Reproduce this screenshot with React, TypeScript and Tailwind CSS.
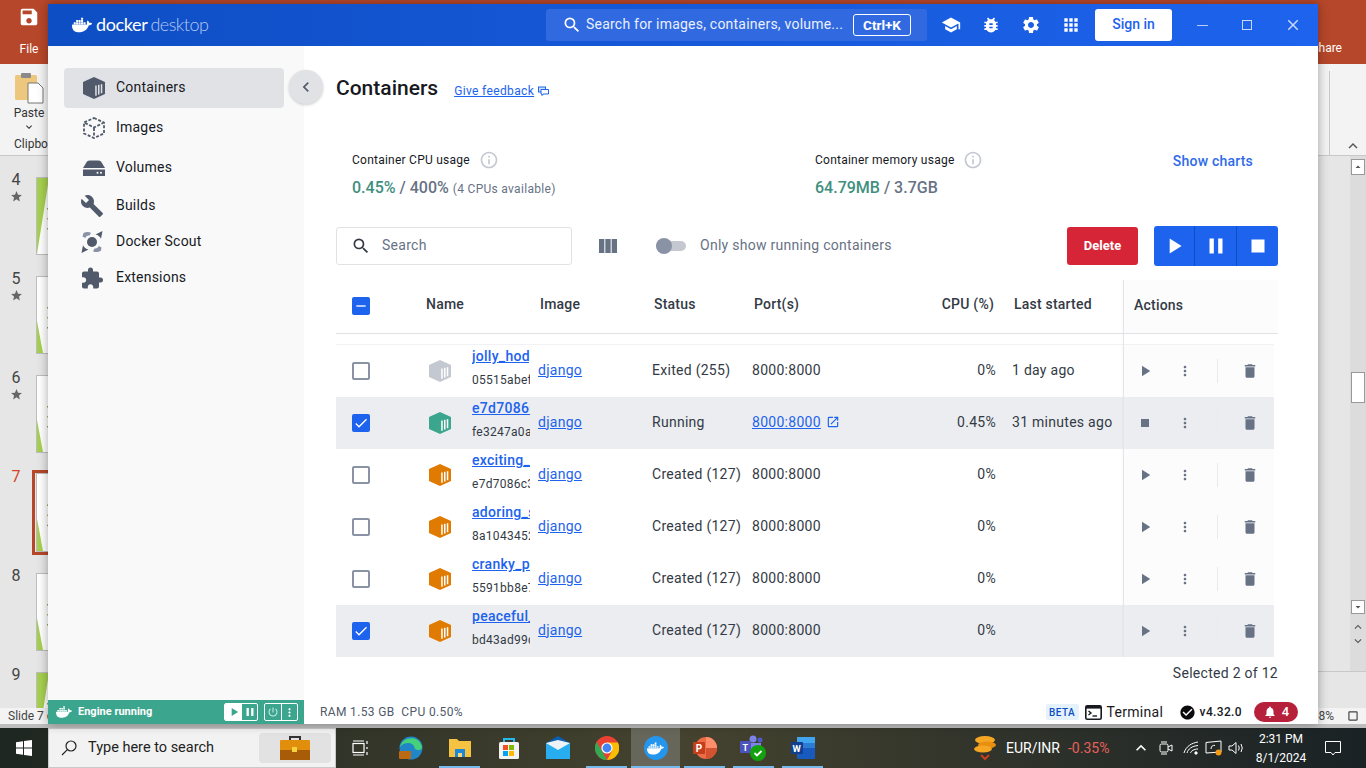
import React from "react";
import { SiDocker } from "react-icons/si";
import {
  MdSearch, MdSchool, MdBugReport, MdSettings, MdApps, MdInfoOutline, MdPlayArrow, MdPause, MdStop,
  MdDelete, MdMoreVert, MdOpenInNew, MdBuild, MdExtension, MdViewColumn, MdPowerSettingsNew,
  MdNotifications, MdCheckCircle, MdChevronLeft, MdKeyboardArrowDown, MdKeyboardArrowUp, MdCheck, MdRemove,
  MdStar, MdSave, MdClose, MdCropSquare, MdArrowDropUp, MdArrowDropDown,
} from "react-icons/md";

function Box({ color, stripe = "#fff", size = 24 }: { color: string; stripe?: string; size?: number }) {
  return (
    <svg width={size} height={size} viewBox="0 0 24 24">
      <polygon points="12,1 23,6 23,18 12,23 1,18 1,6" fill={color} />
      <g fill={stripe}>
        <rect x="13.2" y="9.5" width="1.5" height="10.2" />
        <rect x="16" y="8.8" width="1.5" height="9.7" />
        <rect x="18.8" y="8.2" width="1.5" height="9" />
      </g>
    </svg>
  );
}

function ImagesIcon() {
  return (
    <svg width="24" height="24" viewBox="0 0 24 24" fill="none" stroke="#505a6b" strokeWidth="1.8" strokeDasharray="3 1.6">
      <polygon points="12,2 22,6.5 22,17.5 12,22 2,17.5 2,6.5" />
      <polyline points="3,7 12,11.5 21,7" />
      <line x1="12" y1="12" x2="12" y2="21" />
    </svg>
  );
}

function VolumesIcon() {
  return (
    <svg width="24" height="24" viewBox="0 0 24 24" fill="#505a6b">
      <path d="M1 12 L5 5.5 Q6 4.5 8 4.5 H16 Q18 4.5 19 5.5 L23 12 Z" />
      <path d="M1 13.5 H23 V20 H1 Z" />
      <circle cx="15.5" cy="16.8" r="1" fill="#fff" />
      <circle cx="19" cy="16.8" r="1" fill="#fff" />
    </svg>
  );
}

function ScoutIcon() {
  return (
    <svg width="24" height="24" viewBox="0 0 24 24" fill="#505a6b">
      <circle cx="12" cy="12" r="5" />
      <path d="M3.5 3 C6 1.5 9 1.8 11 2.8 L9.5 5.6 C7.5 5.2 6 6.2 5.2 8 L2.5 6.5 Z" fill="#8993a5" />
      <path d="M22.5 1 L21 8.8 C20 6.5 18 5 15.5 4.5 Z" />
      <path d="M1.5 23 L3 15.2 C4 17.5 6 19 8.5 19.5 Z" />
      <path d="M21 20.5 C18.5 22.5 15 22.5 13 21.2 L14.5 18.4 C16.5 18.8 18 17.8 18.8 16 L21.5 17.5 Z" fill="#8993a5" />
    </svg>
  );
}

function TerminalIcon() {
  return (
    <svg width="17" height="15" viewBox="0 0 17 15" fill="none" stroke="#17191e">
      <rect x="0.8" y="0.8" width="15.4" height="13.4" rx="1.5" strokeWidth="1.6" />
      <rect x="1" y="1" width="15" height="2.6" fill="#17191e" stroke="none" />
      <polyline points="3.5,6 6,8 3.5,10" strokeWidth="1.4" />
      <line x1="7.5" y1="11" x2="12" y2="11" strokeWidth="1.4" />
    </svg>
  );
}

function FeedbackIcon() {
  return (
    <svg width="11" height="10" viewBox="0 0 11 10" fill="none" stroke="#1d63ed">
      <rect x="0.5" y="1" width="7" height="5" fill="#cfe0fb" />
      <path d="M3 3.5 H10.5 V8 H5 L4 9.5 V8 H3 Z" fill="#fff" />
    </svg>
  );
}

function SideItem({ icon, label, h, active, nudge }: { icon: React.ReactNode; label: string; h: string; active?: boolean; nudge?: boolean }) {
  return (
    <div className={`flex items-center rounded ${h} ${active ? "bg-[#e1e2e6]" : ""}`}>
      <div className="flex w-[52px] justify-end pr-[8px] text-[#505a6b]">
        <span className={`flex h-[24px] w-[28px] items-center justify-center ${nudge ? "pr-[4px]" : ""}`}>{icon}</span>
      </div>
      <span className="mb-[2px] text-[14px] tracking-[0.015em] text-[#17191e]">{label}</span>
    </div>
  );
}

type Row = { name: string; id: string; status: string; color: string; stripe?: string; cpu: string; last?: string; sel?: boolean; running?: boolean };

const rows: Row[] = [
  { name: "jolly_hodgkin", id: "05515abef1a2", status: "Exited (255)", color: "#c4c8d1", cpu: "0%", last: "1 day ago" },
  { name: "e7d70860c3f1", id: "fe3247a0a91d", status: "Running", color: "#3ca58d", cpu: "0.45%", last: "31 minutes ago", sel: true, running: true },
  { name: "exciting_ride", id: "e7d7086c3a2b", status: "Created (127)", color: "#e07a00", cpu: "0%" },
  { name: "adoring_shaw", id: "8a10434521cc", status: "Created (127)", color: "#e07a00", cpu: "0%" },
  { name: "cranky_pike", id: "5591bb8e7f10", status: "Created (127)", color: "#e07a00", cpu: "0%" },
  { name: "peaceful_wu", id: "bd43ad99c7e4", status: "Created (127)", color: "#e07a00", cpu: "0%", sel: true },
];

function Check({ on }: { on?: boolean }) {
  return on ? (
    <span className="flex h-[18px] w-[18px] items-center justify-center rounded-[2px] bg-[#1d63ed] text-white"><MdCheck size={16} /></span>
  ) : (
    <span className="block h-[18px] w-[18px] rounded-[2px] border-2 border-[#8993a5]" />
  );
}

function TableRow({ r }: { r: Row }) {
  return (
    <div className={`flex h-[52px] items-stretch text-[14px] tracking-[0.02em] text-[#333a45] ${r.sel ? "bg-[#ebedf0]" : "bg-white"}`}>
      <div className="flex w-[92px] items-center pl-[16px]"><Check on={r.sel} /></div>
      <div className="flex w-[44px] items-center"><Box color={r.color} /></div>
      <div className="w-[58px] overflow-hidden whitespace-nowrap pt-[1px]">
        <div className="h-[20px] font-medium leading-[20px] text-[#1d63ed] underline">{r.name}</div>
        <div className="mt-[6px] h-[16px] text-[12px] leading-[16px] text-[#333a45]">{r.id}</div>
      </div>
      <div className="flex w-[122px] items-center pb-[2px] pl-[8px] text-[#1d63ed] underline">django</div>
      <div className="flex w-[100px] items-center pb-[2px]">{r.status}</div>
      <div className="flex w-[180px] items-center pb-[2px]">
        {r.running ? (
          <span className="flex items-center gap-[5px] text-[#1d63ed]"><span className="underline">8000:8000</span><MdOpenInNew size={14} /></span>
        ) : "8000:8000"}
      </div>
      <div className="flex w-[64px] items-center justify-end pb-[2px]">{r.cpu}</div>
      <div className="flex w-[127px] items-center whitespace-nowrap pb-[2px] pl-[16px]">{r.last}</div>
      <div className={`flex w-[151px] items-center text-[#677285] ${r.sel ? "bg-[#ebedf0]" : "bg-[#fcfcfc]"}`}>
        <span className="flex w-[44px] justify-center">{r.running ? <MdStop size={16} /> : <MdPlayArrow size={18} />}</span>
        <span className="flex w-[36px] justify-center"><MdMoreVert size={16} /></span>
        <span className="ml-[14px] h-[24px] w-px bg-[#e9eaed]" />
        <span className="flex w-[56px] justify-center pl-[8px]"><MdDelete size={18} /></span>
      </div>
    </div>
  );
}

function Thumb({ n, selected, star, top }: { n: number; selected?: boolean; star?: boolean; top?: boolean }) {
  return (
    <div className="flex h-[99px] shrink-0">
      <div className={`flex w-[32px] shrink-0 flex-col items-center text-[16px] leading-[20px] ${selected ? "text-[#d24726]" : "text-[#444]"}`}>
        <span>{n}</span>
        {star && <MdStar size={13} className="text-[#666]" />}
      </div>
      <div className={selected ? "mt-[3px] h-[85px] shrink-0 border-[3px] border-[#b7472a] pl-px" : "ml-[4px] mt-[7px] h-[78px] shrink-0"}>
        <div className="h-full w-[30px] border border-[#bdbdbd] bg-white">
          <svg width="28" height="100%" viewBox="0 0 28 76" preserveAspectRatio="none">
            <polygon points={top ? "0,0 12,0 0,76" : "0,76 6,76 0,44"} fill="#a6d051" />
            <rect x="10" y="30" width="4" height="1.5" fill="#9aa05a" />
            <rect x="10" y="40" width="4" height="1.5" fill="#b9b26a" />
            <rect x="10" y="50" width="4" height="1.5" fill="#9aa05a" />
          </svg>
        </div>
      </div>
    </div>
  );
}

function TaskSlot({ children, bar, active, w = "w-[49px]" }: { children: React.ReactNode; bar?: boolean; active?: boolean; w?: string }) {
  return (
    <div className={`relative flex h-full items-center justify-center ${w} ${active ? "bg-[#66665a]" : ""}`}>
      {children}
      {bar && <span className={`absolute bottom-0 h-[2px] bg-[#76b9ed] ${active ? "inset-x-0" : "inset-x-[4px]"}`} />}
    </div>
  );
}

export default function App() {
  return (
    <div className="relative flex h-[768px] w-[1366px] flex-col overflow-hidden bg-[#e6e6e6] text-[#17191e] [font-family:Roboto,sans-serif]">
      {/* PowerPoint behind */}
      <div className="flex h-[64px] shrink-0 bg-[#b7472a] text-white">
        <div className="flex w-[58px] flex-col items-center pt-[6px]">
          <MdSave size={22} />
          <span className="mt-[13px] text-[12px] leading-[16px]">File</span>
        </div>
        <div className="ml-auto self-end pb-[8px] pr-[24px] text-[12px] leading-[16px]">Share</div>
      </div>
      <div className="flex h-[92px] shrink-0 border-b border-[#c8c8c8] bg-[#f3f3f3] text-[12px] text-[#333]">
        <div className="flex w-[58px] flex-col items-center pt-[8px]">
          <svg width="30" height="32" viewBox="0 0 30 32">
            <rect x="1" y="3" width="22" height="25" rx="1.5" fill="#eec77e" />
            <rect x="7" y="1" width="10" height="5" rx="1" fill="#8a8a8a" />
            <path d="M14 11 H24 L29 16 V31 H14 Z" fill="#fff" stroke="#777" />
          </svg>
          <span className="mt-[1px] leading-[16px]">Paste</span>
          <MdKeyboardArrowDown size={12} />
          <span className="ml-[14px] mt-[3px] self-start whitespace-nowrap leading-[16px]">Clipboard</span>
        </div>
        <div className="ml-auto flex w-[37px] items-end justify-between">
          <span className="mt-[4px] h-[84px] w-px bg-[#c8c8c8]" />
          <MdKeyboardArrowUp size={18} className="mr-[4px] text-[#555]" />
        </div>
      </div>
      <div className="flex min-h-0 flex-1">
        <div className="flex w-[60px] flex-col overflow-hidden pt-[14px]">
          <Thumb n={4} star top />
          <Thumb n={5} star />
          <Thumb n={6} star />
          <Thumb n={7} selected />
          <Thumb n={8} />
          <Thumb n={9} top />
        </div>
        <div className="ml-auto flex h-[516px] w-[48px] justify-end border-b border-[#c8c8c8]">
          <div className="flex w-[16px] flex-col items-center bg-[#dcdcdc] pt-[3px] text-[#555]">
            <span className="flex h-[16px] w-[14px] shrink-0 items-center justify-center border border-[#999] bg-white"><MdArrowDropUp size={14} /></span>
            <span className="mt-[197px] h-[31px] w-[14px] shrink-0 border border-[#999] bg-white" />
            <span className="mt-[197px] flex h-[14px] w-[14px] shrink-0 items-center justify-center border border-[#999] bg-white"><MdArrowDropDown size={14} /></span>
            <MdKeyboardArrowUp size={14} className="mt-[6px] shrink-0" />
            <MdKeyboardArrowDown size={14} className="shrink-0" />
          </div>
        </div>
      </div>
      <div className="flex h-[16px] shrink-0 items-center justify-between bg-[#f3f3f3] pl-[8px] pr-[6px] text-[12px] text-[#444]">
        <span>Slide 7 of 12</span>
        <span className="flex items-center gap-[12px]"><span>68%</span><MdCropSquare size={14} /></span>
      </div>
      <div className="h-[4px] shrink-0 bg-[#bdbdbd]" />

      {/* Taskbar */}
      <div className="flex h-[40px] shrink-0 items-center bg-linear-to-r from-[#1e2621] via-[#45432f] to-[#1a2225]">
        <div className="flex h-full w-[48px] items-center justify-center">
          <svg width="16" height="16" viewBox="0 0 16 16" fill="#fff">
            <path d="M0 2.2 L7 1.2 V7.5 H0 Z M8 1 L16 0 V7.5 H8 Z M0 8.5 H7 V14.8 L0 13.8 Z M8 8.5 H16 V16 L8 15 Z" />
          </svg>
        </div>
        <div className="flex h-full w-[288px] items-center border border-[#c9c9c9] bg-[#f2f2f2] pl-[12px] pr-[4px]">
          <svg width="16" height="16" viewBox="0 0 16 16" fill="none" stroke="#222" strokeWidth="1.2">
            <circle cx="10" cy="6" r="5" />
            <line x1="6.4" y1="9.6" x2="1" y2="15" />
          </svg>
          <span className="ml-[11px] text-[14.5px] text-[#222]">Type here to search</span>
          <span className="ml-auto flex h-[30px] w-[72px] items-center justify-center rounded-[4px] bg-[#e2e2e2]">
            <svg width="30" height="26" viewBox="0 0 30 26">
              <path d="M10 6 V2 H20 V6" fill="none" stroke="#333" strokeWidth="2" />
              <rect x="0" y="5" width="30" height="20" rx="1" fill="#e08e0b" />
              <rect x="0" y="15" width="30" height="10" fill="#a85c08" />
              <rect x="12" y="12" width="5" height="5" fill="#f5d142" />
            </svg>
          </span>
        </div>
        <TaskSlot w="w-[50px]">
          <svg width="18" height="16" viewBox="0 0 18 16" fill="none" stroke="#fff" strokeWidth="1.2">
            <rect x="1" y="3.5" width="11" height="9" />
            <path d="M1 1 H12 M1 15 H12 M15 1 V4 M15 7 V9 M15 12 V15" />
          </svg>
        </TaskSlot>
        <TaskSlot>
          <svg width="24" height="24" viewBox="0 0 24 24">
            <circle cx="12" cy="12" r="11.5" fill="#2086c7" />
            <path d="M1 11 C3 1 20 -2 23 11 C23 15 17 15 15.5 12 C15 6 5 5 1 11 Z" fill="#45d07a" />
            <rect x="0" y="15" width="12" height="8" rx="1" fill="#b96a12" />
          </svg>
        </TaskSlot>
        <TaskSlot bar>
          <svg width="22" height="20" viewBox="0 0 22 20">
            <path d="M0 1 H8 L10 3 H22 V19 H0 Z" fill="#f5c242" />
            <rect x="6" y="11" width="10" height="8" fill="#1e88d8" />
            <rect x="9" y="15" width="4" height="4" fill="#f5d97a" />
          </svg>
        </TaskSlot>
        <TaskSlot>
          <svg width="22" height="22" viewBox="0 0 22 22">
            <path d="M6 5 V2 H16 V5" fill="none" stroke="#25b8ea" strokeWidth="2" />
            <rect x="1" y="5" width="20" height="17" rx="1.5" fill="#f3f3f3" />
            <rect x="5" y="8" width="5" height="5" fill="#f25022" />
            <rect x="11" y="8" width="5" height="5" fill="#7fba00" />
            <rect x="5" y="14" width="5" height="5" fill="#00a4ef" />
            <rect x="11" y="14" width="5" height="5" fill="#ffb900" />
          </svg>
        </TaskSlot>
        <TaskSlot>
          <svg width="24" height="24" viewBox="0 0 24 24">
            <path d="M0 7 L12 0 L24 7 V23 H0 Z" fill="#0a5fb0" />
            <path d="M0 7 H24 V23 H0 Z" fill="#28aef0" />
            <path d="M0 7 L12 14 L24 7 L12 4 Z" fill="#eef3f7" />
          </svg>
        </TaskSlot>
        <TaskSlot bar>
          <svg width="24" height="24" viewBox="0 0 24 24">
            <circle cx="12" cy="12" r="12" fill="#e94235" />
            <path d="M12 24 A12 12 0 0 1 1.6 6 L7 15 Z" fill="#34a853" />
            <path d="M12 6.5 H22.9 A12 12 0 0 1 12 24 L17 15 Z" fill="#fbbc05" />
            <circle cx="12" cy="12" r="5.6" fill="#fff" />
            <circle cx="12" cy="12" r="4.4" fill="#4285f4" />
          </svg>
        </TaskSlot>
        <TaskSlot bar active>
          <span className="flex h-[24px] w-[24px] items-center justify-center rounded-full bg-[#2496ed] text-white"><SiDocker size={17} /></span>
        </TaskSlot>
        <TaskSlot bar>
          <svg width="24" height="22" viewBox="0 0 24 22">
            <circle cx="13" cy="11" r="11" fill="#ed6c47" />
            <path d="M13 0 A11 11 0 0 1 24 11 H13 Z" fill="#ff8f6b" />
            <path d="M13 11 H24 A11 11 0 0 1 13 22 Z" fill="#d35230" />
            <rect x="0" y="5" width="12" height="12" rx="1" fill="#c43e1c" />
            <text x="2.8" y="14.5" fontSize="10" fontWeight="700" fill="#fff" fontFamily="Roboto">P</text>
          </svg>
        </TaskSlot>
        <TaskSlot bar>
          <svg width="28" height="26" viewBox="0 0 28 26">
            <circle cx="13" cy="4" r="3.5" fill="#7b83eb" />
            <circle cx="20" cy="5" r="2.5" fill="#5059c9" />
            <rect x="0" y="6" width="11" height="12" rx="1" fill="#4b53bc" />
            <text x="2.5" y="15.5" fontSize="9" fontWeight="700" fill="#fff" fontFamily="Roboto">T</text>
            <rect x="11" y="8" width="10" height="10" fill="#7b83eb" />
            <circle cx="18" cy="18" r="8" fill="#13a10e" />
            <path d="M14.5 18 L17 20.5 L21.5 16" fill="none" stroke="#fff" strokeWidth="1.8" />
          </svg>
        </TaskSlot>
        <TaskSlot bar>
          <svg width="24" height="22" viewBox="0 0 24 22">
            <rect x="6" y="0" width="18" height="22" rx="1" fill="#185abd" />
            <rect x="6" y="0" width="18" height="6" fill="#41a5ee" />
            <rect x="6" y="6" width="18" height="5" fill="#2b7cd3" />
            <rect x="0" y="5" width="12" height="12" rx="1" fill="#103f91" />
            <text x="1.5" y="14.5" fontSize="9.5" fontWeight="700" fill="#fff" fontFamily="Roboto">W</text>
          </svg>
        </TaskSlot>
        <div className="ml-auto flex h-full items-center text-white">
          <svg width="24" height="26" viewBox="0 0 24 26">
            <ellipse cx="12" cy="5" rx="10" ry="4" fill="#f5a623" />
            <ellipse cx="14" cy="10" rx="9" ry="3.5" fill="#e88f10" />
            <ellipse cx="10" cy="14" rx="9" ry="3.5" fill="#f5a623" />
            <path d="M8 20 L12 24 L16 20" fill="none" stroke="#c8401f" strokeWidth="2" />
          </svg>
          <span className="ml-[9px] w-[53px] whitespace-nowrap text-[14px]">EUR/INR</span>
          <span className="ml-[9px] w-[60px] text-[14px] text-[#e8605a]">-0.35%</span>
          <span className="flex w-[25px] justify-center"><MdKeyboardArrowUp size={20} /></span>
          <span className="flex w-[25px] justify-center">
            <svg width="14" height="16" viewBox="0 0 14 16" fill="none" stroke="#fff"><rect x="1" y="4" width="8" height="8" rx="1.5" /><path d="M9 7 L13 5 V11 L9 9 M2 2 H8 M2 14 H8" /></svg>
          </span>
          <span className="flex w-[25px] justify-center">
            <svg width="16" height="14" viewBox="0 0 16 14" fill="none" stroke="#fff" strokeWidth="1"><path d="M1 12 C3 5 9 2 15 1 M4 12 C5 8 9 5 15 4.5 M7.5 12 C8 10 11 8 15 8" /><circle cx="13" cy="12" r="1.2" fill="#fff" /></svg>
          </span>
          <span className="flex w-[21px] justify-center">
            <svg width="18" height="16" viewBox="0 0 18 16" fill="none" stroke="#fff"><path d="M1 2.5 L16 1 V12 L1 13 Z" /><circle cx="13.5" cy="12.5" r="3" fill="#f59a13" stroke="none" /><path d="M6 9 C6 6 8 5 10 5.5" /></svg>
          </span>
          <span className="flex w-[25px] justify-center">
            <svg width="17" height="14" viewBox="0 0 17 14" fill="none" stroke="#fff"><path d="M1 5 H4 L8 1.5 V12.5 L4 9 H1 Z" /><path d="M10.5 4.5 Q12 7 10.5 9.5 M13 3 Q15.5 7 13 11" /></svg>
          </span>
          <div className="ml-[6px] flex w-[52px] flex-col items-center pt-[1px] text-[12px] leading-[19px]">
            <span>2:31 PM</span>
            <span>8/1/2024</span>
          </div>
          <span className="flex w-[59px] justify-center pr-[7px]">
            <svg width="16" height="15" viewBox="0 0 16 15" fill="none" stroke="#fff"><path d="M0.5 0.5 H15.5 V11.5 H10 L8 14 L6 11.5 H0.5 Z" /></svg>
          </span>
        </div>
      </div>

      {/* Docker Desktop window */}
      <div className="absolute left-[48px] top-[4px] flex h-[720px] w-[1270px] flex-col bg-white shadow-[0_0_10px_rgba(0,0,0,0.35)]">
        <div className="flex h-[42px] shrink-0 items-center bg-linear-to-r from-[#0e4ec4] to-[#1d63ed] text-white">
          <div className="flex w-[498px] items-center pl-[24px]">
            <SiDocker size={20} />
            <span className="mb-[3px] ml-[4px] text-[18px] leading-none tracking-[-0.02em] [font-family:Lato,sans-serif]">docker</span>
            <span className="mb-[3px] ml-[3px] text-[18px] font-light leading-none tracking-[-0.03em] text-[#b4c9f3] [font-family:Lato,sans-serif]">desktop</span>
          </div>
          <div className="flex h-[32px] w-[381px] items-center rounded-[3px] bg-[#3169e0] pl-[16px]">
            <MdSearch size={20} />
            <span className="mb-[2px] ml-[4px] w-[258px] whitespace-nowrap text-[14px] tracking-[0.016em] text-[#eaf0fd]">Search for images, containers, volume...</span>
            <span className="ml-[9px] flex h-[22px] w-[58px] items-center justify-center rounded-[3px] border border-white text-[13.5px] font-bold">Ctrl+K</span>
          </div>
          <span className="ml-[14px] flex w-[20px] justify-center"><MdSchool size={20} /></span>
          <span className="ml-[20px] flex w-[20px] justify-center"><MdBugReport size={20} /></span>
          <span className="ml-[20px] flex w-[20px] justify-center"><MdSettings size={20} /></span>
          <span className="ml-[20px] flex w-[20px] justify-center"><MdApps size={22} /></span>
          <span className="ml-[14px] flex h-[32px] w-[77px] items-center justify-center rounded-[3px] bg-white pb-[2px] text-[14px] font-medium text-[#1d63ed]">Sign in</span>
          <span className="ml-[25px] h-px w-[11px] bg-[#b9cdf7]" />
          <span className="ml-[34px] h-[10px] w-[10px] border border-[#c9d8f9]" />
          <MdClose size={18} className="ml-[32px] text-[#c9d8f9]" />
        </div>

        <div className="relative flex min-h-0 flex-1">
          <aside className="w-[256px] shrink-0 bg-[#f9f9fa] pl-[16px] pr-[20px] pt-[22px]">
            <SideItem active h="h-[40px]" label="Containers" icon={<Box color="#505a6b" stripe="#e1e2e6" />} />
            <SideItem h="h-[40px]" label="Images" icon={<ImagesIcon />} />
            <SideItem h="h-[40px]" label="Volumes" icon={<VolumesIcon />} />
            <SideItem nudge h="h-[36px]" label="Builds" icon={<MdBuild size={26} />} />
            <SideItem nudge h="h-[36px]" label="Docker Scout" icon={<ScoutIcon />} />
            <SideItem nudge h="h-[36px]" label="Extensions" icon={<MdExtension size={25} />} />
          </aside>
          <button className="absolute left-[241px] top-[24px] flex h-[34px] w-[34px] items-center justify-center rounded-full bg-[#e1e2e6] text-[#505a6b] shadow-[0_1px_3px_rgba(0,0,0,0.2)]">
            <MdChevronLeft size={20} />
          </button>

          <main className="min-w-0 flex-1 pl-[32px] pr-[40px] pt-[28px]">
            <div className="flex h-[28px] items-center">
              <h1 className="text-[21px] font-medium leading-[28px]">Containers</h1>
              <span className="ml-[16px] mt-[5px] flex items-center gap-[4px] text-[12px] tracking-[0.03em] text-[#1d63ed]">
                <span className="underline">Give feedback</span><FeedbackIcon />
              </span>
            </div>

            <div className="mt-[50px] flex pl-[16px]">
              <div className="w-[463px]">
                <div className="flex h-[16px] items-center text-[12px] tracking-[0.02em]">
                  Container CPU usage <MdInfoOutline size={20} className="ml-[9px] text-[#c4c8d1]" />
                </div>
                <div className="mt-[8px] flex h-[24px] items-baseline text-[16px] font-medium leading-[24px] text-[#677285]">
                  <span className="text-[#3f8f80]">0.45%</span><span className="ml-[4px]">/ 400%</span>
                  <span className="ml-[4px] text-[12px] font-normal tracking-[0.025em]">(4 CPUs available)</span>
                </div>
              </div>
              <div>
                <div className="flex h-[16px] items-center text-[12px] tracking-[0.02em]">
                  Container memory usage <MdInfoOutline size={20} className="ml-[9px] text-[#c4c8d1]" />
                </div>
                <div className="mt-[8px] h-[24px] text-[16px] font-medium leading-[24px] text-[#677285]">
                  <span className="text-[#3f8f80]">64.79MB</span> / 3.7GB
                </div>
              </div>
              <span className="ml-auto h-[18px] text-[14px] font-medium leading-[18px] tracking-[0.015em] text-[#2f6be8]">Show charts</span>
              <span className="w-[25px]" />
            </div>

            <div className="mt-[26px] flex h-[40px] items-center">
              <div className="flex h-[38px] w-[236px] items-center rounded-[3px] border border-[#e1e2e6] pl-[14px]">
                <MdSearch size={20} className="text-[#333a45]" />
                <span className="mb-[2px] ml-[11px] text-[14px] tracking-[0.02em] text-[#677285]">Search</span>
              </div>
              <MdViewColumn size={24} className="ml-[24px] text-[#677285]" />
              <div className="relative ml-[36px] h-[10px] w-[30px] rounded-full bg-[#c4c8d1]">
                <span className="absolute -top-[3px] left-0 h-[16px] w-[16px] rounded-full bg-[#8993a5]" />
              </div>
              <span className="mb-[2px] ml-[14px] text-[14px] tracking-[0.02em] text-[#677285]">Only show running containers</span>
              <span className="ml-auto flex h-[38px] w-[71px] items-center justify-center rounded-[3px] bg-[#d52536] text-[13px] font-bold text-white">Delete</span>
              <div className="ml-[16px] flex h-[40px] w-[124px] overflow-hidden rounded-[3px] bg-[#1d63ed] text-white">
                <span className="flex w-[41px] items-center justify-center border-r border-[#0e4ec4]"><MdPlayArrow size={26} /></span>
                <span className="flex w-[42px] items-center justify-center border-r border-[#0e4ec4]"><MdPause size={26} /></span>
                <span className="flex flex-1 items-center justify-center"><MdStop size={26} /></span>
              </div>
            </div>

            <div className="relative mt-[14px]">
              <div className="flex h-[54px] items-center border-b border-[#e1e2e6] text-[14px] font-medium tracking-[0.015em] text-[#333a45]">
                <div className="w-[90px] pb-[2px] pl-[16px]">
                  <span className="flex h-[18px] w-[18px] items-center justify-center rounded-[2px] bg-[#1d63ed] text-white"><MdRemove size={16} /></span>
                </div>
                <div className="w-[114px] pb-[5px]">Name</div>
                <div className="w-[114px] pb-[5px]">Image</div>
                <div className="w-[100px] pb-[5px]">Status</div>
                <div className="w-[180px] pb-[5px]">Port(s)</div>
                <div className="w-[60px] pb-[5px] text-right">CPU (%)</div>
                <div className="w-[129px] pb-[5px] pl-[20px]">Last started</div>
                <div className="flex h-full flex-1 items-center bg-[#fcfcfc] pb-[3px] pl-[11px]">Actions</div>
              </div>
              <div className="mt-[10px] w-[938px] border-t border-[#f1f2f4]">
                {rows.map((r) => <TableRow key={r.name} r={r} />)}
              </div>
              <span className="absolute bottom-0 left-[787px] top-0 w-px bg-[#e4e5e8] shadow-[-1px_0_2px_rgba(0,0,0,0.04)]" />
            </div>

            <div className="mt-[6px] text-right text-[14px] leading-[20px] tracking-[0.02em] text-[#333a45]">Selected 2 of 12</div>
          </main>
        </div>

        <div className="flex h-[24px] shrink-0 items-center">
          <div className="flex h-full w-[256px] items-center bg-[#3ca58d] pl-[8px] text-white">
            <SiDocker size={16} />
            <span className="ml-[6px] text-[11px] font-bold">Engine running</span>
            <div className="ml-auto flex h-[18px] w-[34px] overflow-hidden rounded-[2px] border border-white">
              <span className="flex w-[17px] items-center justify-center bg-white text-[#3ca58d]"><MdPlayArrow size={14} /></span>
              <span className="flex flex-1 items-center justify-center"><MdPause size={14} /></span>
            </div>
            <div className="ml-[6px] mr-[6px] flex h-[18px] w-[34px] overflow-hidden rounded-[2px] border border-white">
              <span className="flex w-[17px] items-center justify-center border-r border-white text-[#c9ece3]"><MdPowerSettingsNew size={12} /></span>
              <span className="flex flex-1 items-center justify-center"><MdMoreVert size={13} /></span>
            </div>
          </div>
          <span className="ml-[16px] whitespace-pre text-[12px] tracking-[0.03em] text-[#505a6b]">RAM 1.53 GB  CPU 0.50%</span>
          <div className="ml-auto flex items-center pr-[20px]">
            <span className="flex h-[16px] w-[33px] items-center justify-center rounded-[2px] bg-[#e5f2fc] text-[10px] font-medium tracking-[0.05em] text-[#0e4ec4]">BETA</span>
            <span className="ml-[6px]"><TerminalIcon /></span>
            <span className="ml-[5px] w-[56px] whitespace-nowrap text-[14px] tracking-[0.02em]">Terminal</span>
            <MdCheckCircle size={17} className="ml-[16px] text-[#0b0b0d]" />
            <span className="ml-[4px] text-[12px] font-medium tracking-[0.03em]">v4.32.0</span>
            <span className="ml-[12px] flex h-[20px] w-[44px] items-center justify-center gap-[5px] rounded-full bg-[#b7203a] text-[13px] font-medium text-white"><MdNotifications size={14} />4</span>
          </div>
        </div>
      </div>
    </div>
  );
}
